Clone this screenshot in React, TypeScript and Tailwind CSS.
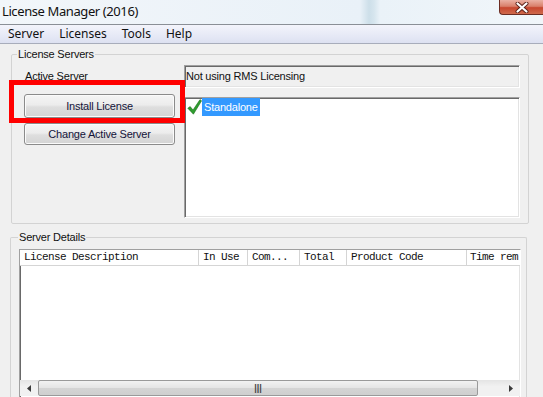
import React from 'react';

const sunken =
  'border border-t-[#a0a0a0] border-l-[#a0a0a0] border-r-white border-b-white shadow-[inset_1px_1px_0_#696969,inset_-1px_-1px_0_#e3e3e3]';

const winButton =
  'w-full rounded-[3px] border border-[#8b8b8b] bg-[linear-gradient(#f5f5f5,#ececec_45%,#dedede_55%,#d4d4d4)] text-[11px] tracking-[-0.2px] text-[#14143a] flex items-center justify-center shadow-[inset_0_0_0_1px_#fbfbfb]';

const CheckIcon: React.FC<{ className?: string }> = ({ className }) => (
  <svg viewBox="0 0 15 16" className={className}>
    <path d="M0.8 9.2 L3.2 7.6 L6 11 L13 0.6 L14.6 1.8 L6.4 15.2 Z" fill="#2f9d2f" stroke="#1d6e1d" strokeWidth="0.6" strokeLinejoin="round" />
  </svg>
);

const CloseGlyph: React.FC = () => (
  <svg viewBox="0 0 14 11" className="w-[14px] h-[11px]">
    <path d="M2.5 1.5 L11.5 9.5 M11.5 1.5 L2.5 9.5" stroke="#5a2018" strokeWidth="4" strokeLinecap="round" />
    <path d="M2.5 1.5 L11.5 9.5 M11.5 1.5 L2.5 9.5" stroke="#ffffff" strokeWidth="2.2" strokeLinecap="round" />
  </svg>
);

const columns = [
  { label: 'License Description', w: 'w-[179px]' },
  { label: 'In Use', w: 'w-[49px]' },
  { label: 'Com...', w: 'w-[52px]' },
  { label: 'Total', w: 'w-[47px]' },
  { label: 'Product Code', w: 'w-[120px]' },
];

export default function App() {
  return (
    <div className="w-[543px] h-[397px] overflow-hidden bg-[#f0f0f0] font-['Liberation_Sans',Arial,sans-serif] text-black flex flex-col">
      {/* title bar */}
      <div className="h-[25px] shrink-0 flex justify-between items-start border-b border-[#8a8f96] bg-[linear-gradient(90deg,#f2f6fa_0,#e9f1f8_360px,#cddfe9_369px,#d6e5ee_374px,#eaf2f8_380px,#f1f6fa_100%)]">
        <span className="pl-[2px] pt-[1px] text-[13px] tracking-[-0.4px] leading-[20px] font-['Noto_Sans',sans-serif] text-[#111]">
          License Manager (2016)
        </span>
        <div className="w-[44px] h-[15px] rounded-bl-[4px] border border-t-0 border-r-0 border-[#6b2c22] bg-[linear-gradient(#eab1a4,#d9806b_45%,#c7472f_55%,#cf6a4c)] flex items-center justify-center">
          <CloseGlyph />
        </div>
      </div>

      {/* menu bar */}
      <div className="h-[19px] shrink-0 flex items-center gap-[15px] pl-[8px] border-b border-[#a8adbb] bg-[linear-gradient(#f3f4fb,#e6e9f6_60%,#dde1f1)] text-[12px] font-['Noto_Sans',sans-serif] text-[#111]">
        <span>Server</span>
        <span>Licenses</span>
        <span>Tools</span>
        <span>Help</span>
      </div>

      {/* body */}
      <div className="flex-1 flex flex-col text-[11px] tracking-[-0.2px]">
        <fieldset className="mt-[3px] ml-[11px] w-[518px] border border-[#d3d3d3] rounded-[2px] pl-[12px] pr-[8px] pt-[4px] pb-[5px]">
          <legend className="ml-[-7px] px-[1px] leading-[14px] text-[#111]">License Servers</legend>
          <div className="flex gap-[9px]">
            <div className="w-[151px] flex flex-col">
              <div className="h-[23px] flex items-center pl-[1px] text-[#111]">Active Server</div>
              <div className="relative mt-[6px]">
                <button className={`${winButton} h-[24px]`}>Install License</button>
                <div className="absolute -left-[15px] -top-[14px] -right-[10px] -bottom-[5px] border-[5px] border-[#ff0000] pointer-events-none" />
              </div>
              <button className={`${winButton} h-[22px] mt-[5px]`}>Change Active Server</button>
            </div>
            <div className="flex-1 flex flex-col">
              <div className={`${sunken} h-[23px] bg-[#f0f0f0] flex items-center pl-[1px] text-[#111]`}>
                Not using RMS Licensing
              </div>
              <div className={`${sunken} h-[121px] mt-[9px] bg-white`}>
                <div className="flex items-center pl-[2px]">
                  <CheckIcon className="w-[15px] h-[16px]" />
                  <span className="h-[18px] leading-[18px] px-[2px] bg-[#3399ff] text-white">Standalone</span>
                </div>
              </div>
            </div>
          </div>
        </fieldset>

        <fieldset className="mt-[6px] ml-[10px] w-[517px] flex-1 border border-b-0 border-[#d3d3d3] rounded-t-[2px] pl-[8px] pr-[5px] pt-[5px]">
          <legend className="ml-[-1px] px-[1px] leading-[14px] text-[#111]">Server Details</legend>
          <div className={`${sunken} w-[502px] h-[150px] bg-white flex flex-col overflow-hidden`}>
            <div className="h-[16px] shrink-0 flex border-b border-[#d5d5d5] bg-white font-['Liberation_Mono',monospace] text-[11px] tracking-[-0.6px] text-[#111] whitespace-nowrap">
              {columns.map((c) => (
                <div key={c.label} className={`${c.w} shrink-0 border-r border-[#d5d5d5] pl-[4px] leading-[15px]`}>
                  {c.label}
                </div>
              ))}
              <div className="flex-1 pl-[3px] leading-[15px] overflow-hidden">Time rem</div>
            </div>
            <div className="flex-1" />
            {/* horizontal scrollbar */}
            <div className="h-[16px] shrink-0 flex items-stretch bg-[linear-gradient(#e4e4e4,#f1f1f1_40%,#f1f1f1)] mb-[2px]">
              <div className="w-[18px] flex items-center justify-center">
                <svg viewBox="0 0 4 7" className="w-[4px] h-[7px]">
                  <path d="M4 0 L0 3.5 L4 7 Z" fill="#3a3a3a" />
                </svg>
              </div>
              <div className="w-[440px] rounded-[2px] border border-[#9a9a9a] bg-[linear-gradient(#f2f2f2,#e4e4e4_50%,#d4d4d4_50%,#cfcfcf)] flex items-center justify-center">
                <span className="text-[9px] leading-[9px] tracking-[0px] text-[#444] font-bold">|||</span>
              </div>
              <div className="flex-1" />
              <div className="w-[18px] flex items-center justify-center">
                <svg viewBox="0 0 4 7" className="w-[4px] h-[7px]">
                  <path d="M0 0 L4 3.5 L0 7 Z" fill="#3a3a3a" />
                </svg>
              </div>
            </div>
          </div>
        </fieldset>
      </div>
    </div>
  );
}
